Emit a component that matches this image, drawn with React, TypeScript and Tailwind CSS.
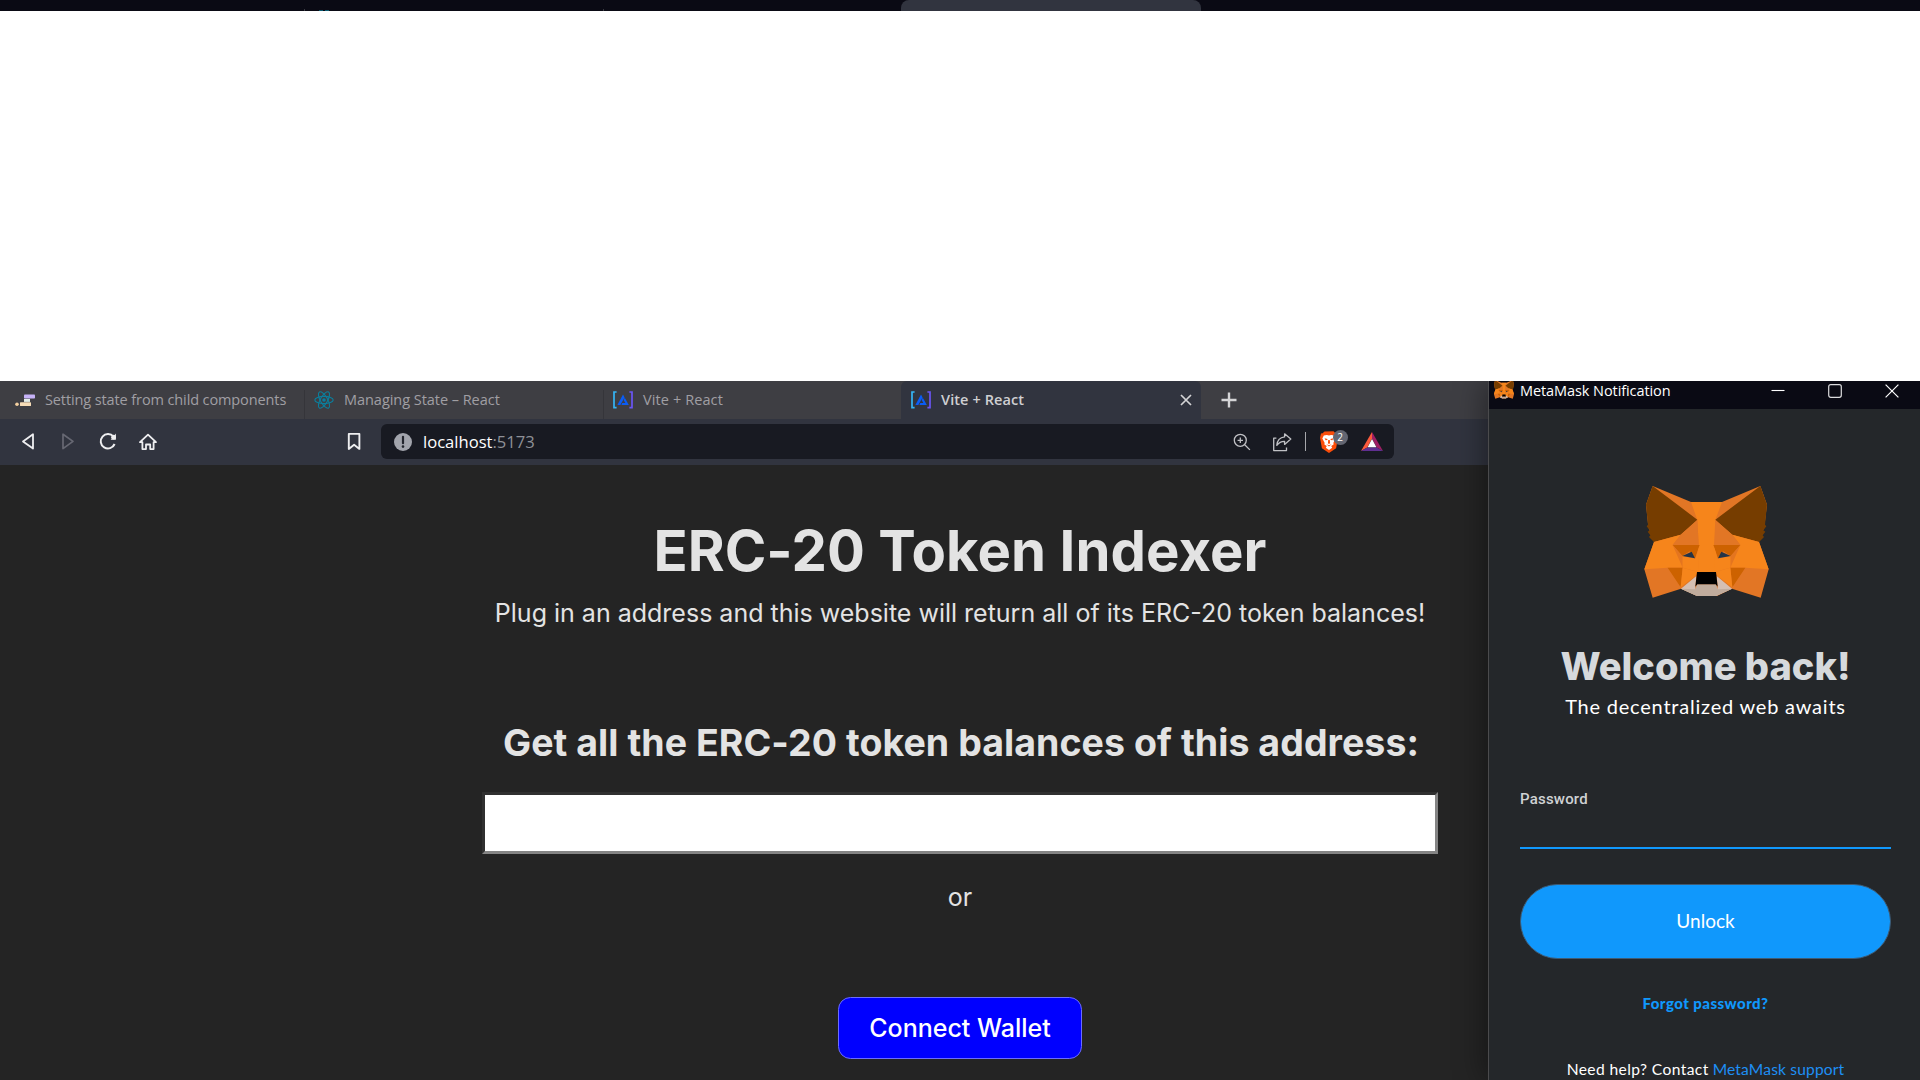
import type { ReactNode } from "react";

function Fox({ className, viewBox }: { className: string; viewBox: string }) {
  return (
    <svg className={className} viewBox={viewBox} preserveAspectRatio="none">
      <path fill="#e27625" d="M97 48 212 96H305L420 48 440 104 432 170 416 216 445 298 421 383 335 356 290 378H230L182 356 97 383 72 298 101 216 84 170 77 104Z" />
      <path fill="#f6851b" d="M212 96H305L285 150 290 225 285 300 290 306H228L233 300 235 225 231 150Z" />
      <path fill="#763d00" d="M97 48 231 149 181 194 101 216 86 201 90 196 82 185 88 181 79 169 83 164 77 104Z" />
      <path fill="#763d00" d="M420 48 285 149 336 194 416 216 431 201 427 196 435 185 429 181 438 169 434 164 440 104Z" />
      <path fill="#f6851b" d="M101 216 181 194 157 225 186 262 187 293 142 293 72 298Z" />
      <path fill="#f6851b" d="M416 216 336 194 360 225 331 262 330 293 375 293 445 298Z" />
      <path fill="#e27625" d="M231 150 181 194 157 225H235ZM285 150 336 194 360 225H281Z" />
      <path fill="#cd6200" d="M157 225H238L224 265 208 244 186 258ZM360 225H279L293 265 309 244 331 258Z" />
      <path fill="#e4751f" d="M157 225 186 258 187 293ZM360 225 331 258 330 293Z" />
      <path fill="#f6851b" d="M187 258 225 266 238 225 233 306 187 293ZM330 258 292 266 279 225 284 306 330 293Z" />
      <path fill="#233447" d="M186 258 214 245 224 265ZM331 258 303 245 293 265Z" />
      <path fill="#cd6200" d="M142 293H187L181 352ZM375 293H330L336 352Z" />
      <path fill="#f6851b" d="M187 293 233 306 226 318 181 352ZM330 293 284 306 291 318 336 352Z" />
      <path fill="#d5bfb2" d="M182 356 228 318 225 352 230 378ZM335 356 289 318 292 352 287 378Z" />
      <path fill="#c0ac9d" d="M182 356 225 358 230 343H287L292 358 335 356 287 378H230Z" />
      <path fill="#000" d="M230 306H287L292 350 286 343H231L225 350Z" />
    </svg>
  );
}

function ReactAtom() {
  return (
    <svg className="h-5 w-5" viewBox="-10 -10 20 20" fill="none" stroke="#0b7f9d" strokeWidth="1.1">
      <circle r="1.8" fill="#0b7f9d" stroke="none" />
      <ellipse rx="9.2" ry="3.6" />
      <ellipse rx="9.2" ry="3.6" transform="rotate(60)" />
      <ellipse rx="9.2" ry="3.6" transform="rotate(120)" />
    </svg>
  );
}

function BracketLogo() {
  return (
    <svg className="h-5 w-5" viewBox="0 0 20 20" fill="none">
      <path d="M3.6 2H1v15.6h2.6" stroke="#35b5f5" strokeWidth="1.7" />
      <path d="M16.4 2H19v15.6h-2.6" stroke="#6a55f5" strokeWidth="1.7" />
      <path d="M10 4.4 4.4 15h2.9L10.4 9.6l1.2-2.2z" fill="#0a5cf5" />
      <path d="m11.8 7.8 4 7.2H8.4l.9-1.9h3.1l-1.8-3z" fill="#0a5cf5" />
    </svg>
  );
}

function StepsIcon() {
  return (
    <svg className="h-5 w-5" viewBox="0 0 20 20">
      <rect x="9" y="4.6" width="11" height="4" rx=".8" fill="#c6b2f7" />
      <rect x="9" y="8.9" width="6" height="3" fill="#e3ede8" />
      <circle cx="2" cy="14.2" r="1.8" fill="#f3cf9f" />
      <rect x="5" y="12.3" width="11" height="3.8" rx=".6" fill="#f6dcb7" />
    </svg>
  );
}

function Tab({ icon, children, className }: { icon: ReactNode; children: ReactNode; className: string }) {
  return (
    <div className={`flex h-full shrink-0 items-center gap-[10px] whitespace-nowrap text-[14.5px] ${className}`}>
      {icon}
      {children}
    </div>
  );
}

function Separator() {
  return <div className="h-[29px] w-px shrink-0 self-end bg-[#35353a]" />;
}

function TabBar() {
  return (
    <div className="flex h-[38px] bg-[#3e3e43] text-[#a09fa3]">
      <Tab icon={<StepsIcon />} className="w-[304px] pl-[15px] tracking-[-0.11px]">Setting state from child components</Tab>
      <Separator />
      <Tab icon={<ReactAtom />} className="w-[298px] pl-[9px] tracking-[-0.04px]">Managing State – React</Tab>
      <Separator />
      <Tab icon={<BracketLogo />} className="w-[297px] pl-[9px] tracking-[0.1px]">Vite + React</Tab>
      <Tab icon={<BracketLogo />} className="w-[300px] rounded-t-md bg-[#31343f] pl-[10px] font-semibold tracking-[0.1px] text-[#cfcfd2]">
        <span>Vite + React</span>
        <svg className="mr-[9px] ml-auto h-3 w-3" viewBox="0 0 12 12" stroke="#d4d4d6" strokeWidth="1.7">
          <path d="m1 1 10 10M11 1 1 11" />
        </svg>
      </Tab>
      <svg className="ml-[20px] h-4 w-4 self-center" viewBox="0 0 16 16" stroke="#d4d4d6" strokeWidth="2.4">
        <path d="M8 .5v15M.5 8h15" />
      </svg>
    </div>
  );
}

function Toolbar() {
  return (
    <div className="flex h-[46px] items-center bg-[#31343f] pb-px pl-[20px]">
      <svg className="h-5 w-4" viewBox="0 0 16 20" fill="none" stroke="#eeeef0" strokeWidth="1.8" strokeLinejoin="round">
        <path d="M13 2.2v14.4L3 9.4z" />
      </svg>
      <svg className="ml-6 h-5 w-4" viewBox="0 0 16 20" fill="none" stroke="#676873" strokeWidth="1.7" strokeLinejoin="round">
        <path d="M3 2.2v14.4l10-7.2z" />
      </svg>
      <svg className="ml-[22px] h-5 w-5" viewBox="0 0 20 20" fill="none" stroke="#eeeef0" strokeWidth="2">
        <path d="M16.6 12A7.2 7.2 0 1 1 15.5 4.7" />
        <path d="M17.9 1.4v6.4h-5.2z" fill="#eeeef0" stroke="none" />
        <circle cx="15.6" cy="5.2" r="2.4" fill="#eeeef0" stroke="none" />
      </svg>
      <svg className="ml-5 h-5 w-5" viewBox="0 0 20 20" fill="none" stroke="#eeeef0" strokeWidth="1.8" strokeLinejoin="round">
        <path d="m2 10.2 8-7.6 8 7.6H15.6v6.9h-3.4v-4.6H8v4.6H4.4v-6.9z" />
      </svg>
      <svg className="ml-[188px] h-5 w-4" viewBox="0 0 16 20" fill="none" stroke="#eeeef0" strokeWidth="1.9" strokeLinejoin="round">
        <path d="M2.8 1.9h10.6v15L8.1 12.7l-5.3 4.2z" />
      </svg>
      <div className="ml-[19px] flex h-[35px] w-[1013px] items-center rounded-md bg-[#181a22] pl-[13px] text-[16.6px]">
        <svg className="h-[18px] w-[18px]" viewBox="0 0 18 18">
          <circle cx="9" cy="9" r="9" fill="#a2a4ac" />
          <path d="M9 3.8v6.4" stroke="#22242c" strokeWidth="2.2" strokeLinecap="round" />
          <circle cx="9" cy="13.6" r="1.3" fill="#22242c" />
        </svg>
        <span className="mt-px ml-[11px] text-white">
          localhost<span className="text-[#8e9097]">:5173</span>
        </span>
        <svg className="mr-[21px] ml-auto h-[18px] w-[18px]" viewBox="0 0 18 18" fill="none" stroke="#c0c1c5" strokeWidth="1.3">
          <circle cx="7.3" cy="7.3" r="6" />
          <path d="m11.7 11.7 5.2 5.2M7.3 4.6V10M4.6 7.3H10" />
        </svg>
        <svg className="h-5 w-5" viewBox="0 0 20 20" fill="none" stroke="#c0c1c5" strokeWidth="1.3" strokeLinejoin="round">
          <path d="M4.4 6.2H1.7v12.4h12.8V15.4" />
          <path d="M12.6 1.8 18.8 7.1l-6.2 5.3V9.3C8.8 9.2 6.8 10.6 4.8 13.4 5.2 8.6 8 5.4 12.6 4.9z" />
        </svg>
        <div className="ml-[13px] h-[19px] w-px bg-[#a6a7ab]" />
        <div className="relative ml-[14px] h-[22px] w-[18px]">
          <svg className="h-[22px] w-[18px]" viewBox="0 0 18 22">
            <path fill="#fb4d0a" d="m4.5.5 9-.2 1.8 1.9 1.7.4 1 4.2-1.9 10.4L9 22 1.9 17.2 0 6.8l1-4.2 1.6-.4z" />
            <path fill="#fff" d="m3.8 4.4 3-.4L9 4.6l2.2-.6 3 .4 1.5 3-2.3 4.3.2 1.8-2.4 1.6 1 1.6L9 19l-3.2-2.3 1-1.6-2.4-1.6.2-1.8-2.3-4.3z" />
            <path fill="#fb4d0a" d="m4.6 7.2 3 .8-.4 1-1.6.2zM13.4 7.2l-3 .8.4 1 1.6.2zM8.2 9h1.6l.3 3.2L9 13l-1.1-.8zM6.4 13.2l2.6 1 2.6-1L9 15.6z" />
          </svg>
          <span className="absolute top-[-1px] left-[12.5px] flex h-[15px] w-[15px] items-center justify-center rounded-full bg-[#636672] text-[10px] leading-none text-white">2</span>
        </div>
        <svg className="mr-[11px] ml-[23px] h-[19px] w-[22px]" viewBox="0 0 22 19">
          <path fill="#fb5a3c" d="M11 0v6.6L6.3 15.4 0 19z" />
          <path fill="#9e1f63" d="M11 0v6.6l4.7 8.8L22 19z" />
          <path fill="#5f2f91" d="m0 19 6.3-3.6h9.4L22 19z" />
          <path fill="#fff" d="m11 7-4.4 8.2h8.8z" />
        </svg>
      </div>
    </div>
  );
}

function Browser() {
  return (
    <div className="w-[1488px] font-['Open_Sans',sans-serif]">
      <TabBar />
      <Toolbar />
      <div className="flex h-[615px] bg-[#242424] font-['Inter',sans-serif] text-[25px] text-[#e3e3e3]">
        <main className="flex w-[1920px] shrink-0 flex-col items-center whitespace-nowrap pt-[53px]">
          <h1 className="h-[67px] text-[56.25px] leading-[67px] font-bold tracking-[0.06px]">ERC-20 Token Indexer</h1>
          <p className="mt-[9px] h-[38px] leading-[38px]">
            Plug in an address and this website will return all of its ERC-20 token balances!
          </p>
          <h2 className="mt-[88px] h-[46px] pl-[2px] text-[37.5px] leading-[46px] font-bold tracking-[0.05px]">
            Get all the ERC-20 token balances of this address:
          </h2>
          <input className="mt-[26px] h-[62px] w-[956px] border-[3px] border-t-[#303030] border-r-[#858585] border-b-[#858585] border-l-[#303030] bg-white" />
          <p className="mt-[24px] h-[38px] leading-[38px]">or</p>
          <button className="mt-[81px] h-[62px] w-[244px] rounded-[12.5px] border border-[#6c6cff] bg-[#0000ff] pt-[2px] font-medium text-white">
            Connect Wallet
          </button>
        </main>
      </div>
    </div>
  );
}

function MetaMaskWindow() {
  return (
    <aside className="relative w-[432px] border-l border-[#4b4b4d] bg-[#24272a] shadow-[-4px_0_28px_rgba(0,0,0,0.38)]">
      <div className="flex h-[28px] bg-[#0a0a14] pr-[21px] pl-[5px] font-['Open_Sans',sans-serif] text-[14.5px] text-white">
        <Fox className="mt-[-1px] h-[19px] w-5" viewBox="74 46 370 340" />
        <span className="ml-[6px] h-5 leading-[19px] tracking-[-0.08px]">MetaMask Notification</span>
        <svg className="mt-[3px] ml-auto h-[14px] w-[14px]" viewBox="0 0 14 14" stroke="#fff" strokeWidth="1.1">
          <path d="M.5 6.5h13" />
        </svg>
        <svg className="mt-[3px] ml-[43px] h-[14px] w-[14px]" viewBox="0 0 14 14" fill="none" stroke="#dcdcde" strokeWidth="1.2">
          <rect x=".7" y=".7" width="12.6" height="12.6" rx="2" />
        </svg>
        <svg className="mt-[3px] ml-[43px] h-[14px] w-[14px]" viewBox="0 0 14 14" stroke="#fff" strokeWidth="1.2">
          <path d="m.6.6 12.8 12.8M13.4.6.6 13.4" />
        </svg>
      </div>
      <div className="ml-[31px] flex w-[371px] flex-col items-center pt-[61px] font-['Lato',sans-serif] whitespace-nowrap text-white">
        <Fox className="h-[140px] w-[180px]" viewBox="-13 0 540 420" />
        <h1 className="mt-[32px] h-12 font-['Inter',sans-serif] text-[38px] leading-[48px] font-extrabold text-[#d6d9dc]">Welcome back!</h1>
        <p className="mt-[2px] h-7 text-[20px] leading-[28px] tracking-[0.78px]">The decentralized web awaits</p>
        <label className="mt-[69px] h-5 self-start font-['Roboto',sans-serif] text-[15px] leading-[20px] font-medium tracking-[0.2px] text-[#cfd2d4]">
          Password
        </label>
        <div className="mt-[38px] h-[2px] w-full bg-[#1098fc]" />
        <button className="mt-[35px] h-[75px] w-full rounded-full border border-[#3f5a72] bg-[#1098fc] text-[19px]">Unlock</button>
        <a className="mt-[34px] h-5 text-[15px] leading-[20px] font-black tracking-[0.45px] text-[#1098fc]">Forgot password?</a>
        <p className="mt-[46px] flex h-5 gap-1 text-[15.6px] leading-[20px]">
          <span className="tracking-[0.4px]">Need help? Contact</span>
          <a className="tracking-[0.15px] text-[#1e8ff5]">MetaMask support</a>
        </p>
      </div>
    </aside>
  );
}

export default function App() {
  return (
    <div className="flex h-[1080px] w-[1920px] flex-col overflow-hidden bg-white">
      <div className="flex h-[11px] shrink-0 items-end overflow-hidden bg-[#0a0a14]">
        <div className="ml-[304px] h-[2px] w-px bg-[#3a3a42]" />
        <div className="ml-[14px] h-px w-1 bg-[#0b5a70]" />
        <div className="ml-[2px] h-px w-1 bg-[#0b5a70]" />
        <div className="ml-[274px] h-[2px] w-px bg-[#3a3a42]" />
        <div className="ml-[297px] h-[11px] w-[300px] rounded-t-lg bg-[#31343f]" />
      </div>
      <div className="h-[370px] shrink-0" />
      <div className="flex h-[699px] overflow-hidden">
        <div className="w-[1488px] shrink-0 overflow-hidden">
          <Browser />
        </div>
        <MetaMaskWindow />
      </div>
    </div>
  );
}
